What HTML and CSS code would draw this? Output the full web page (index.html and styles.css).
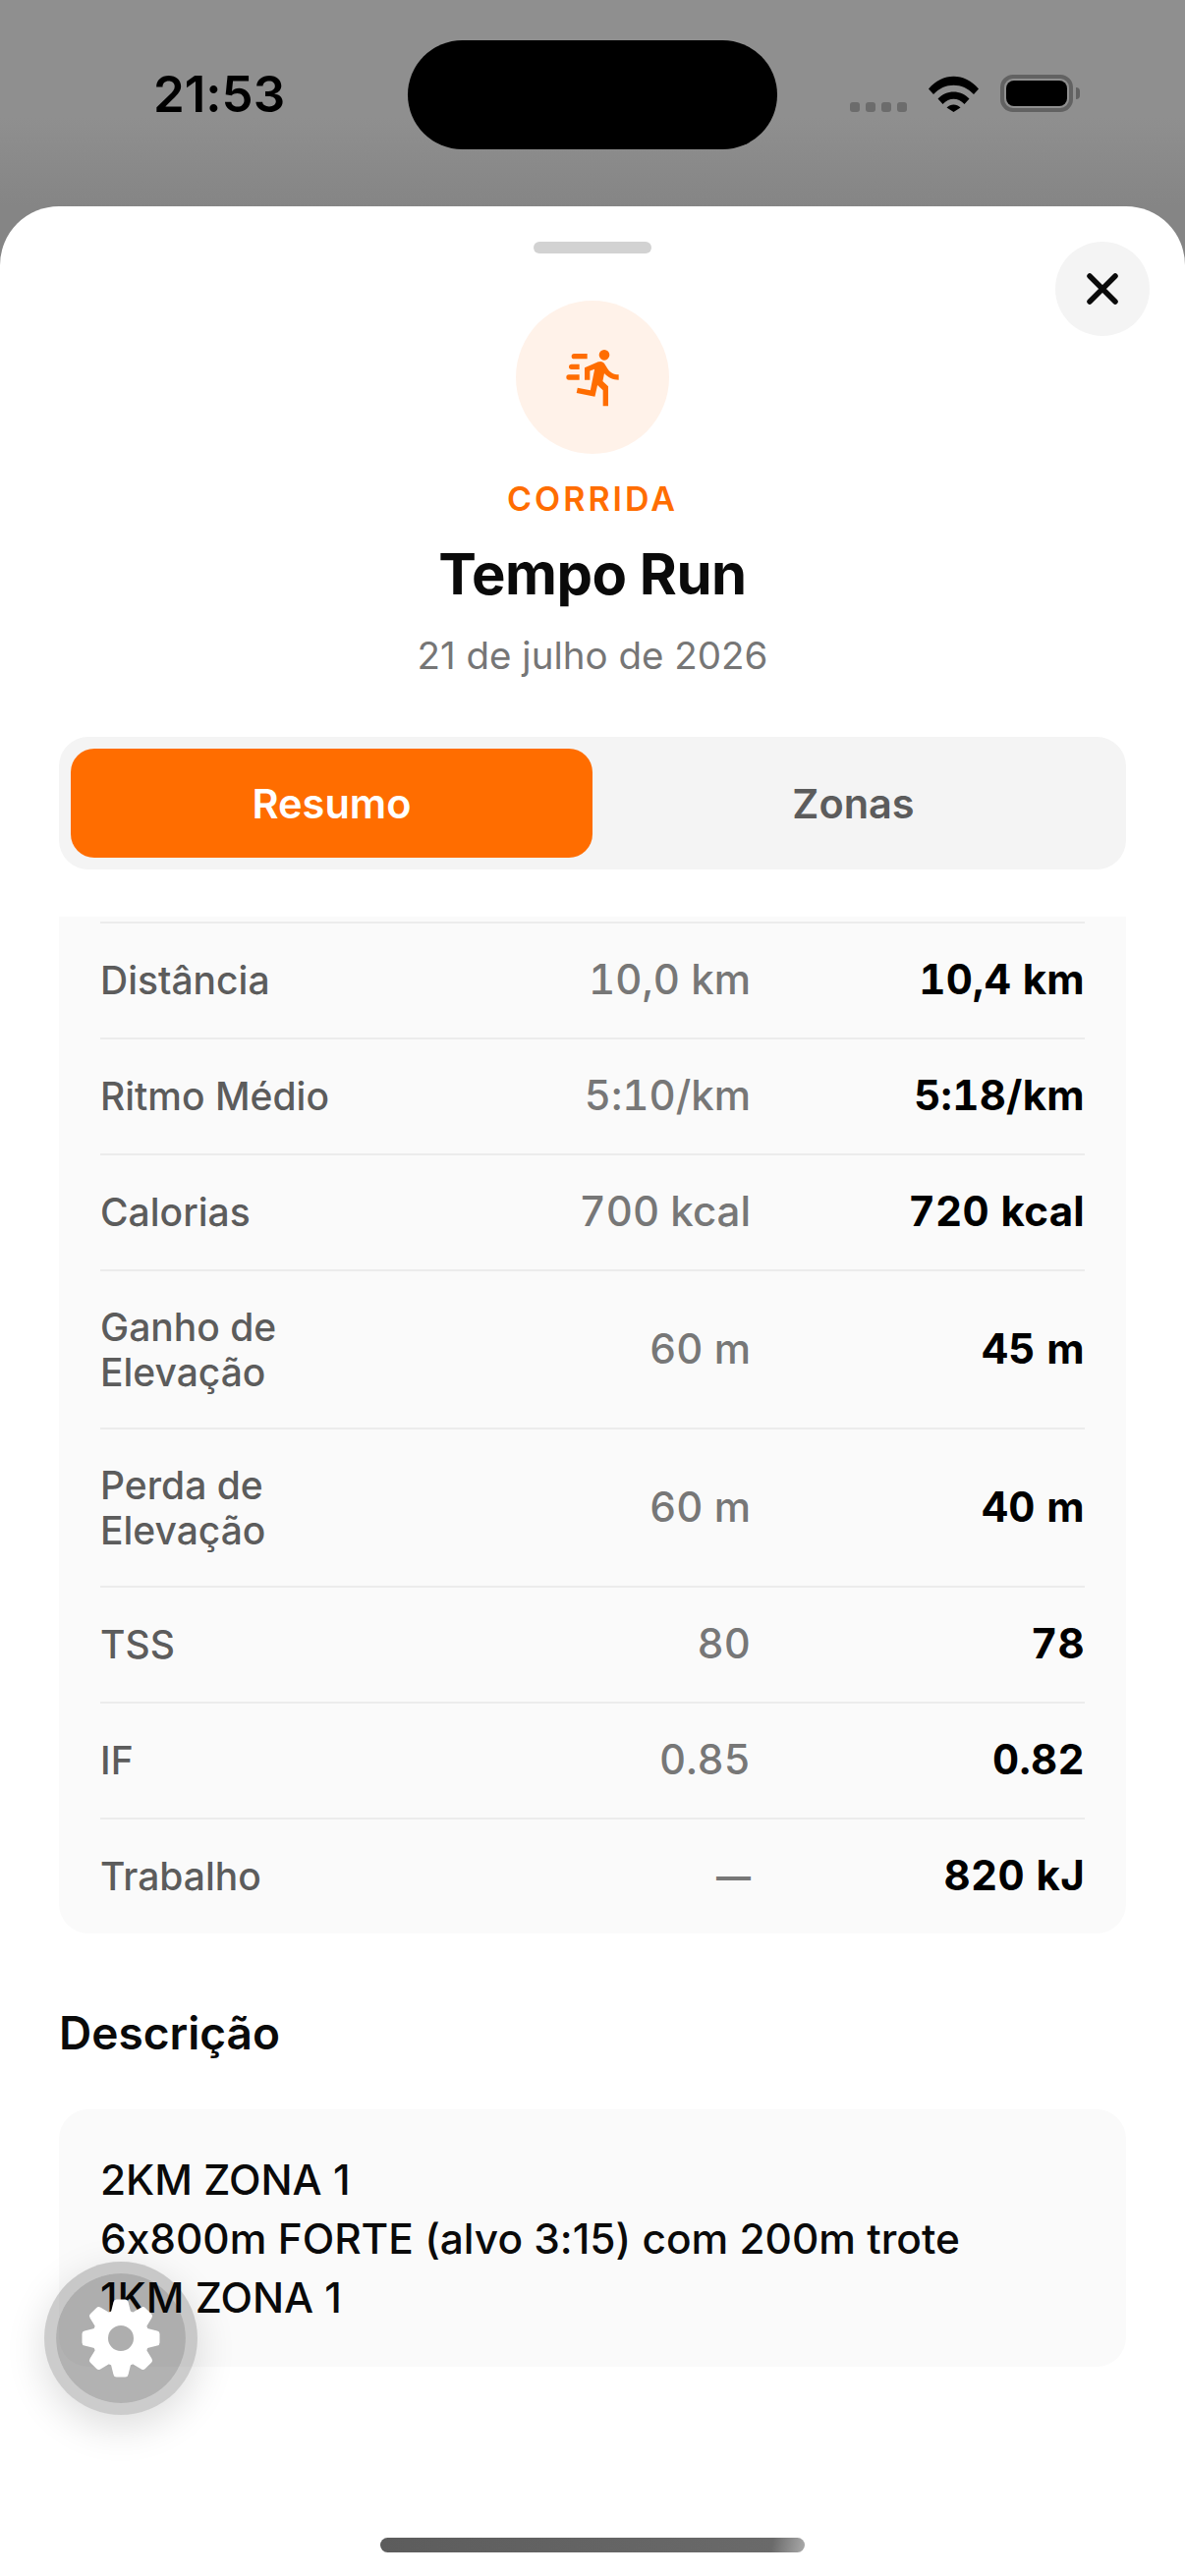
FILE: index.html
```html
<!DOCTYPE html>
<html>
<head>
    <meta charset="utf-8">
    <meta name="viewport" content="width=device-width, initial-scale=1.0">
    <title>Tempo Run</title>
    <link rel="stylesheet" href="styles.css">
</head>
<body>
    <header class="status-bar">
        <span class="status-time">21:53</span>
        <div class="island"></div>
        <div class="status-icons">
            <div class="signal"><i></i><i></i><i></i><i></i></div>
            <svg class="wifi" viewBox="0 0 51 37" width="51" height="37">
                <path d="M0 13.5C14-3.5 37-3.5 51 13.5L46 19C35 6.500 16 6.500 5 19Z"/>
                <path d="M9.500 23.500C18 14 33 14 41.500 23.500L36.500 29C30 22 21 22 14.500 29Z"/>
                <path d="M18.500 32.500C22.500 28.500 28.500 28.500 32.500 32.500L25.500 37Z"/>
            </svg>
            <div class="battery"><div class="battery-fill"></div></div>
            <div class="battery-cap"></div>
        </div>
    </header>

    <main class="sheet">
        <div class="handle"></div>
        <button class="close-btn" aria-label="Fechar">
            <svg viewBox="0 0 32 32" width="32" height="32"><path d="M3 3L29 29M29 3L3 29"/></svg>
        </button>

        <section class="workout-head">
            <div class="type-icon">
                <svg viewBox="0 0 24 24" width="64" height="64"><path d="M16.5,5.500A2,2 0 0,0 18.500,3.500A2,2 0 0,0 16.500,1.500A2,2 0 0,0 14.500,3.500A2,2 0 0,0 16.500,5.500M12.900,19.400L13.900,15L16,17V23H18V15.500L15.900,13.500L16.500,10.500C17.890,12.090 19.890,13 22,13V11C20.240,11.030 18.600,10.110 17.700,8.600L16.700,7C16.340,6.400 15.700,6 15,6C14.700,6 14.500,6.100 14.200,6.100L9,8.300V13H11V9.600L12.800,8.900L11.200,17L6.300,16L5.900,18L12.900,19.400M4,9A1,1 0 0,1 3,8A1,1 0 0,1 4,7H7V9H4M5,5A1,1 0 0,1 4,4A1,1 0 0,1 5,3H10V5H5M3,13A1,1 0 0,1 2,12A1,1 0 0,1 3,11H7V13H3Z"/></svg>
            </div>
            <div class="type-name">CORRIDA</div>
            <h1 class="workout-title">Tempo Run</h1>
            <div class="workout-date">21 de julho de 2026</div>
        </section>

        <div class="tabs">
            <div class="tab active">Resumo</div>
            <div class="tab">Zonas</div>
        </div>

        <section class="stats">
            <div class="stat-row"><span class="stat-label">Distância</span><span class="stat-plan">10,0 km</span><span class="stat-done">10,4 km</span></div>
            <div class="stat-row"><span class="stat-label">Ritmo Médio</span><span class="stat-plan">5:10/km</span><span class="stat-done">5:18/km</span></div>
            <div class="stat-row"><span class="stat-label">Calorias</span><span class="stat-plan">700 kcal</span><span class="stat-done">720 kcal</span></div>
            <div class="stat-row tall"><span class="stat-label">Ganho de Elevação</span><span class="stat-plan">60 m</span><span class="stat-done">45 m</span></div>
            <div class="stat-row tall"><span class="stat-label">Perda de Elevação</span><span class="stat-plan">60 m</span><span class="stat-done">40 m</span></div>
            <div class="stat-row"><span class="stat-label">TSS</span><span class="stat-plan">80</span><span class="stat-done">78</span></div>
            <div class="stat-row"><span class="stat-label">IF</span><span class="stat-plan">0.85</span><span class="stat-done">0.82</span></div>
            <div class="stat-row"><span class="stat-label">Trabalho</span><span class="stat-plan stat-empty">—</span><span class="stat-done">820 kJ</span></div>
        </section>

        <h2 class="section-title">Descrição</h2>
        <section class="description">
            2KM ZONA 1<br>
            6x800m FORTE (alvo 3:15) com 200m trote<br>
            1KM ZONA 1
        </section>

        <button class="settings-fab" aria-label="Ajustes">
            <svg viewBox="-40 -40 80 80" width="80" height="80">
                <circle class="gear-body" r="21"/>
                <path id="tooth" d="M-10-27L-7.500-37Q-7-39.500-4.500-39.500H4.500Q7-39.500 7.500-37L10-27Z"/>
                <use href="#tooth" transform="rotate(45)"/>
                <use href="#tooth" transform="rotate(90)"/>
                <use href="#tooth" transform="rotate(135)"/>
                <use href="#tooth" transform="rotate(180)"/>
                <use href="#tooth" transform="rotate(225)"/>
                <use href="#tooth" transform="rotate(270)"/>
                <use href="#tooth" transform="rotate(315)"/>
            </svg>
        </button>

        <div class="home-bar"></div>
    </main>
</body>
</html>
```

FILE: styles.css
```css
body {
    margin: 0;
    width: 1206px;
    height: 2622px;
    overflow: hidden;
    font-family: Inter, "Noto Sans", sans-serif;
    font-feature-settings: "calt" 0;
    background: linear-gradient(#8f8f8f, #8f8f8f 120px, #858585 210px);
    color: #0a0a0a;
}

/* status bar */
.status-bar {
    height: 210px;
    box-sizing: border-box;
    padding-top: 41px;
    position: relative;
    display: flex;
    justify-content: center;
}
.status-time {
    position: absolute;
    left: 156px;
    top: 66px;
    font-family: Inter, sans-serif;
    font-size: 51px;
    line-height: 60px;
    font-weight: 600;
    color: #000;
}
.island {
    width: 376px;
    height: 111px;
    border-radius: 56px;
    background: #000;
}
.status-icons {
    position: absolute;
    left: 865px;
    top: 76px;
    display: flex;
    align-items: flex-start;
}
.signal {
    display: flex;
    gap: 6px;
    margin-top: 28px;
    margin-right: 22px;
}
.signal i {
    width: 10px;
    height: 10px;
    border-radius: 3px;
    background: #6c6c6c;
}
.wifi {
    fill: #000;
    margin-top: 1px;
    margin-right: 22px;
}
.battery {
    width: 74px;
    height: 38px;
    box-sizing: border-box;
    border: 4px solid #626262;
    border-radius: 13px;
    padding: 2px;
}
.battery-fill {
    height: 100%;
    border-radius: 8px;
    background: #000;
}
.battery-cap {
    width: 4px;
    height: 12px;
    margin: 13px 0 0 3px;
    border-radius: 0 6px 6px 0;
    background: #626262;
}

/* sheet */
.sheet {
    position: relative;
    height: 2412px;
    box-sizing: border-box;
    padding: 36px 60px 0;
    background: #fff;
    border-radius: 60px 60px 0 0;
}
.handle {
    width: 120px;
    height: 12px;
    margin: 0 auto;
    border-radius: 6px;
    background: #d2d2d2;
}
.close-btn {
    position: absolute;
    top: 36px;
    right: 36px;
    width: 96px;
    height: 96px;
    padding: 0;
    display: flex;
    align-items: center;
    justify-content: center;
    border: none;
    border-radius: 50%;
    background: #f4f4f4;
}
.close-btn path {
    fill: none;
    stroke: #0a0a0a;
    stroke-width: 5.500;
    stroke-linecap: round;
}
.workout-head {
    display: flex;
    flex-direction: column;
    align-items: center;
}
.type-icon {
    width: 156px;
    height: 156px;
    margin-top: 48px;
    display: flex;
    align-items: center;
    justify-content: center;
    border-radius: 50%;
    background: #fff2e9;
    fill: #ff6d00;
}
.type-name {
    margin-top: 24px;
    font-size: 34px;
    line-height: 44px;
    font-weight: 600;
    letter-spacing: 3px;
    color: #ff6d00;
}
.workout-title {
    margin: 19px 0 0;
    font-size: 58px;
    line-height: 70px;
    font-weight: 700;
    letter-spacing: -0.500px;
}
.workout-date {
    margin-top: 24px;
    font-size: 38.500px;
    line-height: 48px;
    color: #767676;
}

/* tabs */
.tabs {
    display: flex;
    height: 135px;
    box-sizing: border-box;
    margin-top: 59px;
    padding: 12px;
    border-radius: 30px;
    background: #f4f4f4;
}
.tab {
    flex: 1;
    display: flex;
    align-items: center;
    justify-content: center;
    border-radius: 24px;
    font-size: 41.500px;
    font-weight: 600;
    color: #5c5c5c;
}
.tab.active {
    background: #ff6d00;
    color: #fff;
}

/* stats table */
.stats {
    margin-top: 48px;
    padding: 5px 42px 0;
    border-radius: 0 0 30px 30px;
    background: #fafafa;
}
.stat-row {
    display: grid;
    grid-template-columns: 250px 412px 340px;
    align-items: center;
    height: 118px;
    box-sizing: border-box;
    border-top: 2px solid #ececec;
}
.stat-row.tall {
    height: 161px;
}
.stat-label {
    font-size: 39px;
    line-height: 46px;
    font-weight: 500;
    color: #5c5c5c;
}
.stat-plan,
.stat-done {
    text-align: right;
    font-size: 42px;
    line-height: 48px;
    padding-bottom: 2px;
    font-variant-numeric: tabular-nums;
}
.stat-plan {
    font-weight: 550;
    color: #777;
}
.stat-plan.stat-empty {
    font-size: 35px;
    font-weight: 700;
}
.stat-done {
    font-weight: 700;
    letter-spacing: 0.300px;
    color: #000;
}

/* description */
.section-title {
    margin: 71px 0 0;
    font-size: 46px;
    line-height: 60px;
    font-weight: 600;
}
.description {
    margin-top: 48px;
    padding: 42px;
    height: 262px;
    box-sizing: border-box;
    border-radius: 30px;
    background: #fafafa;
    font-size: 42.400px;
    line-height: 60px;
    font-weight: 550;
}

/* floating settings button */
.settings-fab {
    position: absolute;
    left: 45px;
    top: 2092px;
    width: 156px;
    height: 156px;
    padding: 0;
    display: flex;
    align-items: center;
    justify-content: center;
    border: 12px solid rgba(0, 0, 0, 0.2);
    border-radius: 50%;
    background: rgba(0, 0, 0, 0.3);
    background-clip: padding-box;
    box-shadow: 0 12px 40px rgba(0, 0, 0, 0.14);
    box-sizing: border-box;
}
.settings-fab svg {
    fill: #fff;
    flex: none;
}
.gear-body {
    fill: none;
    stroke: #fff;
    stroke-width: 16;
}

.home-bar {
    position: absolute;
    left: 387px;
    top: 2373px;
    width: 432px;
    height: 15px;
    border-radius: 8px;
    background: linear-gradient(100deg, #5c5c5c, #6a6a6a 92%, #aaaaaa);
}
```
